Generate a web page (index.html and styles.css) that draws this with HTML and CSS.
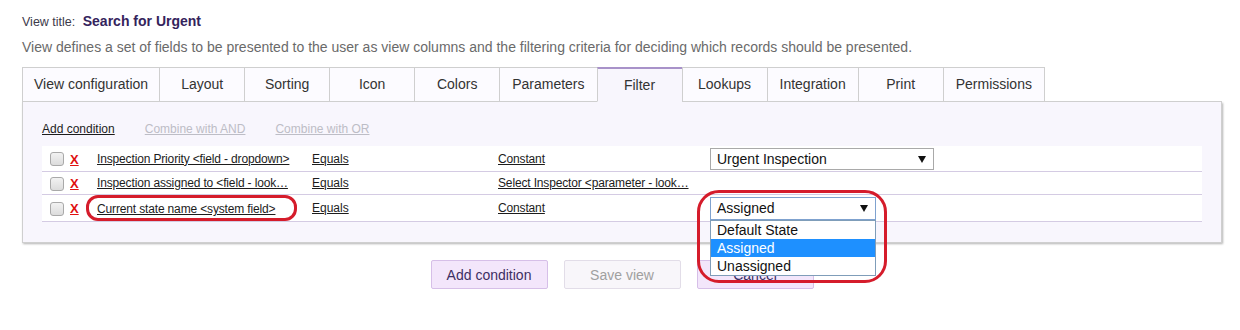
FILE: index.html
```html
<!DOCTYPE html>
<html lang="en">
<head>
    <meta charset="UTF-8">
    <title>Search for Urgent - Filter</title>
    <link rel="stylesheet" href="styles.css">
</head>
<body>
    <div class="page">
        <div class="view-title">View title: <b>Search for Urgent</b></div>
        <p class="view-desc">View defines a set of fields to be presented to the user as view columns and the filtering criteria for deciding which records should be presented.</p>

        <div class="tabs">
            <div class="tab">View configuration</div>
            <div class="tab">Layout</div>
            <div class="tab">Sorting</div>
            <div class="tab">Icon</div>
            <div class="tab">Colors</div>
            <div class="tab">Parameters</div>
            <div class="tab tab-active">Filter</div>
            <div class="tab">Lookups</div>
            <div class="tab">Integration</div>
            <div class="tab">Print</div>
            <div class="tab">Permissions</div>
            <div class="tab-fill"></div>
        </div>

        <div class="panel">
            <div class="panel-links">
                <a class="link" href="#">Add condition</a>
                <span class="link-off">Combine with AND</span>
                <span class="link-off">Combine with OR</span>
            </div>

            <div class="conditions">
                <div class="cond-row">
                    <span class="chk"></span>
                    <a class="del" href="#">X</a>
                    <a class="link cell-text" href="#">Inspection Priority &lt;field - dropdown&gt;</a>
                    <a class="link" href="#">Equals</a>
                    <a class="link cell-text" href="#">Constant</a>
                    <div class="select select-wide">Urgent Inspection</div>
                </div>
                <div class="cond-row">
                    <span class="chk"></span>
                    <a class="del" href="#">X</a>
                    <a class="link cell-text" href="#">Inspection assigned to &lt;field - look&hellip;</a>
                    <a class="link" href="#">Equals</a>
                    <a class="link cell-text" href="#">Select Inspector &lt;parameter - look&hellip;</a>
                    <div></div>
                </div>
                <div class="cond-row">
                    <span class="chk"></span>
                    <a class="del" href="#">X</a>
                    <div class="marked">
                        <a class="link cell-text" href="#">Current state name &lt;system field&gt;</a>
                        <span class="ring ring-field"></span>
                    </div>
                    <a class="link" href="#">Equals</a>
                    <a class="link cell-text" href="#">Constant</a>
                    <div class="select-wrap">
                        <div class="select select-open">Assigned</div>
                        <ul class="options">
                            <li>Default State</li>
                            <li class="option-hot">Assigned</li>
                            <li>Unassigned</li>
                        </ul>
                        <span class="ring ring-list"></span>
                    </div>
                </div>
            </div>
        </div>

        <div class="actions">
            <button class="btn">Add condition</button>
            <button class="btn btn-off">Save view</button>
            <button class="btn">Cancel</button>
        </div>
    </div>
</body>
</html>
```

FILE: styles.css
```css
body { margin: 0; font-family: "Liberation Sans", Arial, sans-serif; color: #222; background: #fff; }
.page { width: 1200px; padding: 13px 0 0 22px; }

.view-title { font-size: 12.5px; line-height: 16px; height: 16px; color: #3c3a4a; }
.view-title b { font-size: 14px; line-height: 16px; margin-left: 4px; color: #34235c; }
.view-desc { margin: 10px 0 0; font-size: 14px; line-height: 16px; color: #6a6a6a; }

.tabs { display: flex; margin-top: 12px; height: 35px; }
.tab { min-width: 86px; padding: 0 12px; box-sizing: border-box; height: 35px; line-height: 33px; text-align: center; font-size: 14px; color: #333; background: #fcfbff; border: 1px solid #cfcfcf; margin-left: -1px; }
.tab:first-child { margin-left: 0; padding: 0 11px; }
.tab-active { background: #f8f6fd; border-top: 2px solid #a892c9; line-height: 32px; border-bottom-color: #f8f6fd; }
.tab-fill { flex: 1; border-bottom: 1px solid #cfcfcf; }

.panel { background: #f8f6fd; border: 1px solid #cfcfcf; border-top: none; padding: 19px 19px 20px; box-shadow: 1px 1px 2px rgba(0, 0, 0, 0.3); }
.panel-links { display: flex; gap: 30px; font-size: 12px; line-height: 16px; margin-bottom: 9px; }
.link { color: #1c1c1c; text-decoration: underline; font-size: 12px; }
.link-off { color: #bdbdc6; text-decoration: underline; }

.conditions { background: #fff; }
.cond-row { display: grid; grid-template-columns: 20px 27px 215px 186px 212px 1fr; align-items: center; padding: 2px 0 1px 8px; line-height: 19px; border-bottom: 1px solid #d4cbe3; }
.chk { width: 12px; height: 12px; border: 1px solid #a9a9a9; border-radius: 3px; background: linear-gradient(#f2f2f2, #dcdcdc); }
.del { color: #e01010; font-weight: bold; font-size: 13px; text-decoration: underline; }
.cell-text { white-space: nowrap; letter-spacing: -0.15px; }

.select { display: flex; justify-content: space-between; align-items: center; box-sizing: border-box; height: 22px; padding: 0 7px 0 6px; font-size: 14px; color: #111; background: #fff; border: 1px solid #a9a9a9; }
.select::after { content: ""; border-left: 4px solid transparent; border-right: 4px solid transparent; border-top: 7px solid #111; }
.select-wide { width: 224px; }
.select-open { width: 166px; height: 23px; border-color: #7fa2cf; }

.select-wrap { position: relative; width: 166px; }
.options { position: absolute; top: 100%; left: 0; width: 166px; box-sizing: border-box; margin: 0; padding: 0; list-style: none; background: #fff; border: 1px solid #7f9db9; z-index: 2; }
.options li { font-size: 14px; line-height: 18px; padding-left: 6px; color: #111; }
.options .option-hot { background: #1e90ff; color: #fff; }

.marked { position: relative; line-height: 19px; }
.ring { position: absolute; box-sizing: border-box; border: 3px solid #d51c2b; pointer-events: none; z-index: 3; }
.ring-field { left: -11px; top: -3px; width: 211px; height: 26px; border-radius: 12px; }
.ring-list { left: -13px; top: -7px; width: 190px; height: 93px; border-radius: 22px; }

.actions { display: flex; justify-content: center; gap: 16px; margin-top: 17px; }
.btn { width: 117px; height: 29px; font-family: inherit; font-size: 14px; color: #3d2f63; background: #f3e6fb; border: 1px solid #d6bfe8; border-radius: 2px; padding: 0; }
.btn-off { color: #a0a0a0; background: #f8f6fa; border-color: #e2dde8; }
```
